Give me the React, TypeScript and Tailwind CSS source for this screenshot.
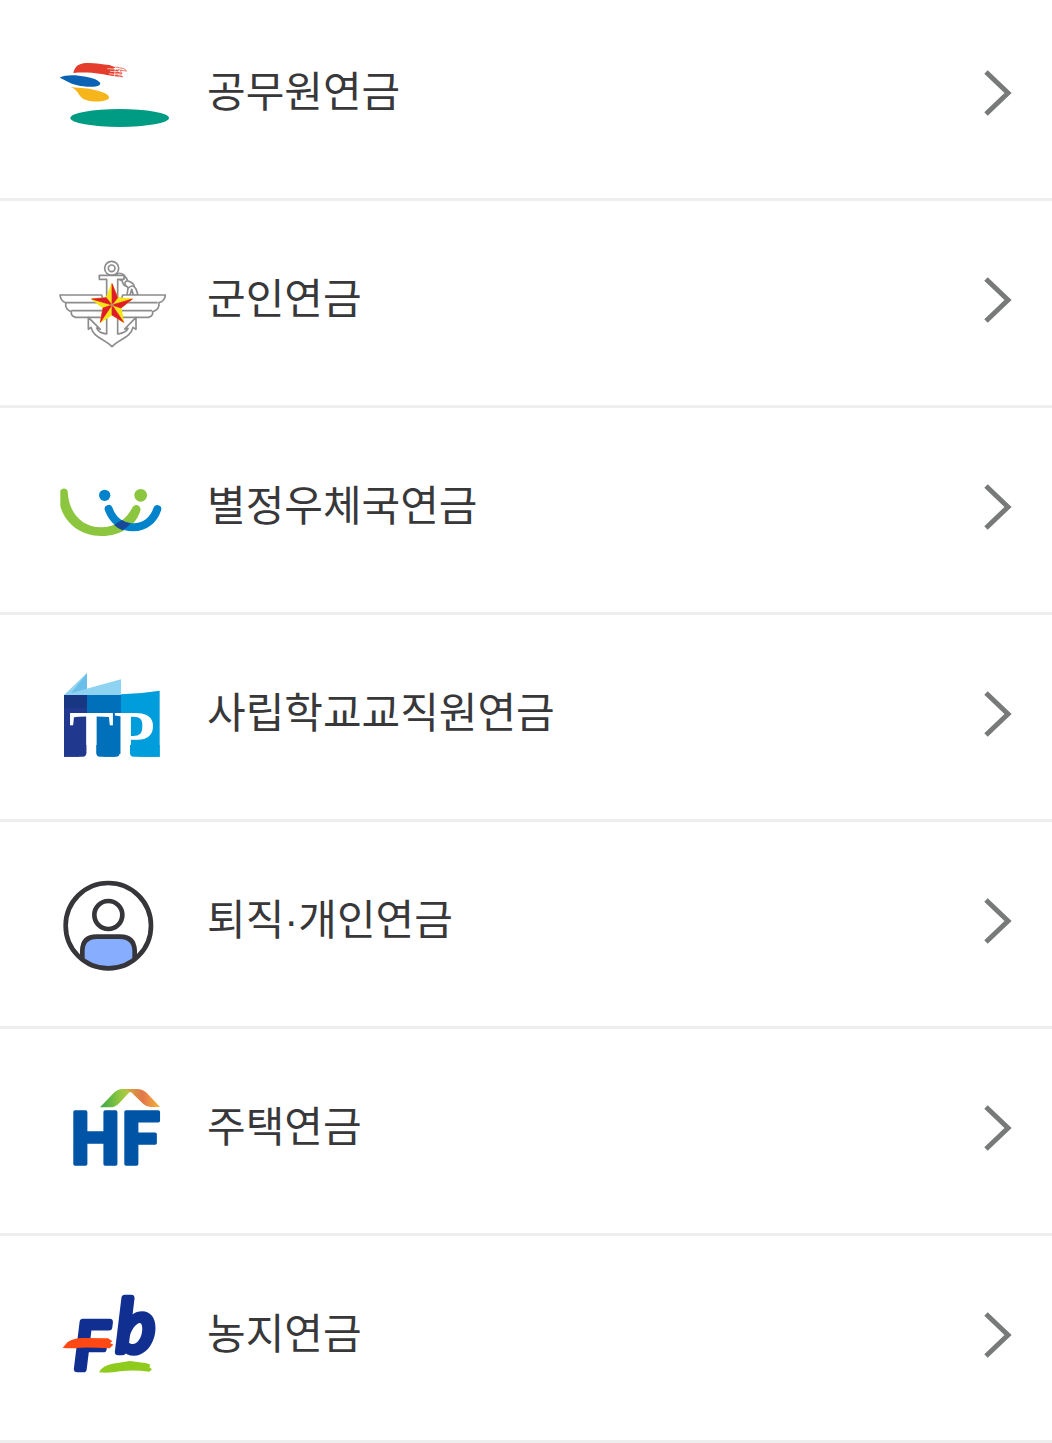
import type { ReactNode } from "react";

function Logo({ viewBox, children }: { viewBox: string; children: ReactNode }) {
  return (
    <svg viewBox={viewBox} className="h-27 w-30 shrink-0 overflow-visible" aria-hidden="true">
      {children}
    </svg>
  );
}

const civil = (
  <Logo viewBox="0 -15 360 324">
    <path d="M70 69C74 52 82 43 101 40C127 37 153 43 178 45L196 52L190 57L217 59L196 64L218 69L192 71L218 82L190 78C158 73 120 64 70 69Z" fill="#e43d2b" />
    <path d="M172 56L204 58M180 64L218 66M177 71L207 75M197 49L193 79M211 54L207 84" stroke="#fff" strokeWidth="2" fill="none" />
    <path d="M196 51L222 56L230 63L211 61L216 72L202 65L218 81L199 73" stroke="#e43d2b" strokeWidth="2" fill="none" />
    <path d="M29 83C46 73 78 74 108 80C136 85 151 94 151 101C148 112 111 113 82 106C57 100 48 91 29 83Z" fill="#0c63b4" />
    <path d="M63 111C95 115 112 113 137 121C164 127 179 136 177 144C173 155 133 158 108 150C84 143 88 122 63 111Z" fill="#f6b51b" />
    <ellipse cx="209" cy="204" rx="148" ry="27" fill="#009b83" />
  </Logo>
);

const military = (
  <Logo viewBox="0 6 360 324">
    <g fill="#fff" stroke="#8c8c8c" strokeWidth="5" strokeLinejoin="round">
      <circle cx="185" cy="55" r="21" />
      <circle cx="185" cy="55" r="10" />
      <ellipse cx="214" cy="81" rx="15" ry="9" transform="rotate(35 214 81)" />
      <ellipse cx="225" cy="94" rx="14" ry="8" transform="rotate(70 225 94)" />
      <ellipse cx="239" cy="105" rx="16" ry="9" transform="rotate(35 239 105)" />
      <path d="M231 135L234 115Q248 100 258 117L264 135H250L245 118L240 135Z" />
      <path d="M30 135H155L175 202H77Q62 199 64 185Q45 180 47 158Q32 153 30 135Z" />
      <path d="M346 135H218L198 202H295Q310 199 308 185Q329 180 327 158Q345 153 346 135Z" />
      <path d="M47 158H323M64 182H306" fill="none" />
      <path d="M115 202L115 238L123 232C131 265 164 266 186 290C208 266 241 265 249 232L258 238V202L224 237L234 235C229 248 215 250 203 252V88H222V76H148V88H170V252C156 249 145 247 140 234L151 238Z" />
    </g>
    <path d="M186 101L203 143L247 147L213 174L221 217L186 195L151 217L159 174L125 147L169 143Z" fill="#f3e516" stroke="#f3e516" strokeWidth="3" />
    <path d="M186 101L203 143L186 165ZM247 147L213 174L186 165ZM221 217L186 195V165ZM151 217L159 174L186 165ZM125 147L169 143L186 165Z" fill="#df1b29" stroke="#df1b29" strokeWidth="2" />
    <circle cx="186" cy="165" r="5" fill="#c38c62" />
  </Logo>
);

const postal = (
  <Logo viewBox="0 -48 360 324">
    <path d="M31 46Q40 37 49 43Q54 46 54 60C60 118 99 157 153 157C199 157 231 130 247 98C254 83 275 91 271 107C259 148 216 183 154 183C91 183 43 143 31 92Z" fill="#8bc63e" />
    <path d="M176 102C189 137 216 157 250 157C284 157 311 136 322 102" fill="none" stroke="#0083ca" strokeWidth="24" strokeLinecap="round" />
    <path d="M192 149Q207 141 216 135Q229 145 242 145Q233 158 217 166Q203 160 192 149Z" fill="#17489c" />
    <circle cx="164" cy="61" r="17" fill="#0083ca" />
    <circle cx="272" cy="61" r="19" fill="#8bc63e" />
  </Logo>
);

const school = (
  <Logo viewBox="0 3 360 324">
    <path d="M42 90L111 24V90Z" fill="#8ed3f1" />
    <path d="M42 90L213 43V90Z" fill="#8ed3f1" />
    <path d="M64 84L111 24V71Z" fill="#69bfe7" />
    <path d="M42 90H111V275H42Z" fill="#20388d" />
    <path d="M111 90H213V275H111Z" fill="#0070ba" />
    <path d="M213 88Q273 86 329 77V275H213Z" fill="#009ddc" />
    <path d="M42 90H111V128H42Z" fill="#183782" />
    <g fill="#fff" fontFamily="Liberation Serif" fontWeight="700" fontSize="202">
      <text x="57" y="276">T</text>
      <text x="191" y="276">P</text>
    </g>
    <path d="M42 240H109V264Q109 275 98 275H42Z" fill="#20388d" />
    <path d="M139 240H209V264Q209 275 198 275H150Q139 275 139 264Z" fill="#0070ba" />
    <path d="M240 240H329V275H251Q240 275 240 264Z" fill="#009ddc" />
  </Logo>
);

const personal = (
  <Logo viewBox="0 9 360 324">
    <path d="M97 260V242Q98 200 140 200H210Q252 200 254 242V260Q217 294 175 294Q132 293 97 260Z" fill="#86adff" />
    <g fill="none" stroke="#36363a" strokeWidth="14">
      <circle cx="175" cy="167" r="128" />
      <circle cx="175" cy="135" r="42" />
      <path d="M97 265V242Q98 200 140 200H210Q252 200 254 242V265" />
    </g>
  </Logo>
);

const housing = (
  <Logo viewBox="0 0 360 324">
    <defs>
      <linearGradient id="roofLeft">
        <stop stopColor="#36a64b" />
        <stop offset=".5" stopColor="#8dc63f" />
        <stop offset="1" stopColor="#e0ca42" />
      </linearGradient>
      <linearGradient id="roofRight">
        <stop stopColor="#c7bb3a" />
        <stop offset=".55" stopColor="#e2774c" />
        <stop offset="1" stopColor="#f5b436" />
      </linearGradient>
    </defs>
    <path d="M150 82L191 39Q204 26 221 27H263Q246 28 234 41L206 71Q195 82 180 82Z" fill="url(#roofLeft)" />
    <path d="M214 27H261Q278 28 290 38L330 81H302Q290 81 280 72L252 45Q247 38 241 36Q232 28 214 27Z" fill="url(#roofRight)" />
    <g fill="#0054a6" stroke="#0054a6" strokeWidth="11" strokeLinejoin="round" fontFamily="Noto Sans CJK KR" fontWeight="700" fontSize="211">
      <text x="56" y="252">H</text>
      <text x="209" y="252">F</text>
    </g>
  </Logo>
);

const farmland = (
  <Logo viewBox="0 6 360 324">
    <g fill="#102f91" stroke="#102f91" strokeWidth="20" strokeLinejoin="round" fontFamily="Lato" fontStyle="italic">
      <text x="72" y="252" fontSize="196">F</text>
      <text x="198" y="201" fontSize="222">b</text>
    </g>
    <path d="M38 188L53 171Q75 157 105 159L174 160L187 169L180 174L190 179L179 190Q130 187 91 188Q62 192 38 188Z" fill="#ff4814" />
    <path d="M147 262L153 253Q171 236 202 234L240 228L290 235L301 239L298 247L306 253L298 260Q251 254 210 259Q178 265 147 262Z" fill="#8ecb1c" />
  </Logo>
);

const pensions = [
  { name: "공무원연금", logo: civil },
  { name: "군인연금", logo: military },
  { name: "별정우체국연금", logo: postal },
  { name: "사립학교교직원연금", logo: school },
  { name: "퇴직·개인연금", logo: personal },
  { name: "주택연금", logo: housing },
  { name: "농지연금", logo: farmland },
];

export default function App() {
  return (
    <main className="bg-white font-['Liberation_Sans','Noto_Sans_CJK_KR',sans-serif]">
      <ul>
        {pensions.map(({ name, logo }) => (
          <li key={name} className="group border-b-3 border-[#eeeeee]">
            <button
              type="button"
              className="flex w-full items-start pt-[51px] pr-10 pb-[45px] pl-[50px] text-left group-first:pt-[45px]"
            >
              {logo}
              <span className="ml-[37px] flex-1 text-[42px] leading-[96px] text-[#38383a]">{name}</span>
              <svg viewBox="0 0 28 96" className="h-24 w-7 shrink-0" aria-hidden="true">
                <path d="M2 27L24 48L2 69" fill="none" stroke="#777a79" strokeWidth="5" />
              </svg>
            </button>
          </li>
        ))}
      </ul>
    </main>
  );
}
